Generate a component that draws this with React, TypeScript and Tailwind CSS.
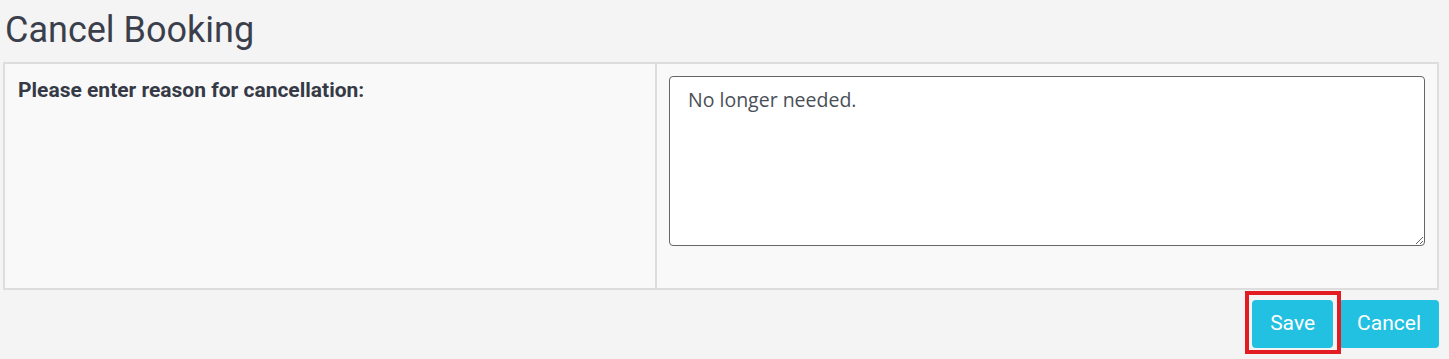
import React from "react";

export default function App() {
  return (
    <div className="min-h-[359px] w-[1449px] bg-[#f4f4f4] font-['Roboto',sans-serif] text-[#3a3f4b]">
      <div className="pl-[3px] pr-[10px]">
        <h1 className="pl-[2px] pt-[10px] text-[36px] leading-[40px] font-normal text-[#3b3f4c]">
          Cancel Booking
        </h1>
        <div className="mt-[12px] flex border-2 border-[#dddddd] bg-[#f9f9f9]">
          <div className="w-[650px] shrink-0 pl-[13px] pt-[14px]">
            <div className="text-[21px] leading-[24px] font-bold text-[#353a46]">
              Please enter reason for cancellation:
            </div>
          </div>
          <div className="flex-1 border-l-2 border-[#dddddd] p-[12px]">
            <textarea
              className="mb-[30px] block h-[170px] w-full resize-y rounded-[4px] border border-[#666666] bg-white px-[18px] py-[10px] font-['Open_Sans',sans-serif] text-[19.5px] leading-[26px] text-[#4a4f57] outline-none"
              defaultValue="No longer needed."
            />
          </div>
        </div>
        <div className="mt-[10px] flex justify-end gap-[6px]">
          <div className="relative">
            <div className="pointer-events-none absolute left-[-7px] right-[-8px] top-[-9px] bottom-[-6px] border-[4px] border-[#e31b23]" />
            <button className="h-[48px] rounded-[4px] bg-[#22c0e1] px-[18px] text-[21px] text-white">
              Save
            </button>
          </div>
          <button className="h-[48px] rounded-[4px] bg-[#22c0e1] px-[18px] text-[21px] text-white">
            Cancel
          </button>
        </div>
      </div>
    </div>
  );
}
